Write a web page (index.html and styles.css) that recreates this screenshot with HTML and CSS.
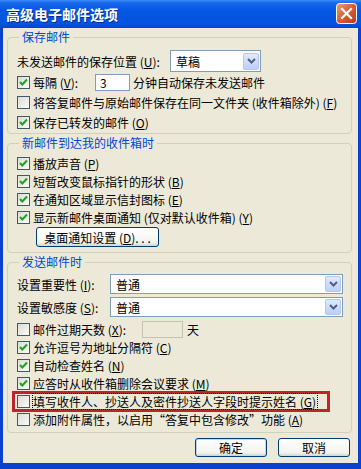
FILE: index.html
```html
<!DOCTYPE html>
<html lang="zh-CN">
<head>
  <meta charset="UTF-8">
  <title>高级电子邮件选项</title>
  <link rel="stylesheet" href="styles.css">
</head>
<body>

  <div class="window">
    <div class="titlebar">
      <span class="title">高级电子邮件选项</span>
      <span class="close">
        <svg width="21" height="21" viewBox="0 0 21 21">
          <defs>
            <linearGradient id="cg" x1="0" y1="0" x2="1" y2="1">
              <stop offset="0" stop-color="#F0A080"/>
              <stop offset="0.5" stop-color="#DC5A33"/>
              <stop offset="1" stop-color="#B9381A"/>
            </linearGradient>
          </defs>
          <rect x="0.5" y="0.5" width="20" height="20" rx="3" fill="url(#cg)" stroke="#fff"/>
          <path d="M6 6 L15 15 M15 6 L6 15" stroke="#fff" stroke-width="2.2" stroke-linecap="square"/>
        </svg>
      </span>
    </div>

    <div class="client">
      <fieldset class="group group-save">
        <legend>保存邮件</legend>
        <div class="row row-combo">
          <span class="label label-save">未发送邮件的保存位置 (<u>U</u>):</span>
          <span class="combo combo-draft">
            <span class="value">草稿</span>
            <span class="drop"><svg width="9" height="6" viewBox="0 0 9 6"><path d="M1 1 L4.5 4.5 L8 1" stroke="#4D6185" stroke-width="2" fill="none"/></svg></span>
          </span>
        </div>
        <div class="row">
          <span class="cb"><svg width="11" height="11" viewBox="0 0 11 11"><path d="M2 5 L4.3 7.5 L9 2.5" stroke="#21A121" stroke-width="2" fill="none"/></svg></span>
          <span class="label label-every">每隔 (<u>V</u>):</span>
          <span class="edit edit-minutes">3</span>
          <span>分钟自动保存未发送邮件</span>
        </div>
        <div class="row">
          <span class="cb"></span>
          <span>将答复邮件与原始邮件保存在同一文件夹 (收件箱除外) (<u>F</u>)</span>
        </div>
        <div class="row">
          <span class="cb"><svg width="11" height="11" viewBox="0 0 11 11"><path d="M2 5 L4.3 7.5 L9 2.5" stroke="#21A121" stroke-width="2" fill="none"/></svg></span>
          <span>保存已转发的邮件 (<u>O</u>)</span>
        </div>
      </fieldset>

      <fieldset class="group group-new">
        <legend>新邮件到达我的收件箱时</legend>
        <div class="row row-tight">
          <span class="cb"><svg width="11" height="11" viewBox="0 0 11 11"><path d="M2 5 L4.3 7.5 L9 2.5" stroke="#21A121" stroke-width="2" fill="none"/></svg></span>
          <span>播放声音 (<u>P</u>)</span>
        </div>
        <div class="row row-tight">
          <span class="cb"><svg width="11" height="11" viewBox="0 0 11 11"><path d="M2 5 L4.3 7.5 L9 2.5" stroke="#21A121" stroke-width="2" fill="none"/></svg></span>
          <span>短暂改变鼠标指针的形状 (<u>B</u>)</span>
        </div>
        <div class="row row-tight">
          <span class="cb"><svg width="11" height="11" viewBox="0 0 11 11"><path d="M2 5 L4.3 7.5 L9 2.5" stroke="#21A121" stroke-width="2" fill="none"/></svg></span>
          <span>在通知区域显示信封图标 (<u>E</u>)</span>
        </div>
        <div class="row row-tight">
          <span class="cb"><svg width="11" height="11" viewBox="0 0 11 11"><path d="M2 5 L4.3 7.5 L9 2.5" stroke="#21A121" stroke-width="2" fill="none"/></svg></span>
          <span>显示新邮件桌面通知 (仅对默认收件箱) (<u>Y</u>)</span>
        </div>
        <button class="btn btn-notify">桌面通知设置 (<u>D</u>). . .</button>
      </fieldset>

      <fieldset class="group group-send">
        <legend>发送邮件时</legend>
        <div class="row row-combo2">
          <span class="label label-send">设置重要性 (<u>I</u>):</span>
          <span class="combo combo-wide">
            <span class="value">普通</span>
            <span class="drop"><svg width="9" height="6" viewBox="0 0 9 6"><path d="M1 1 L4.5 4.5 L8 1" stroke="#4D6185" stroke-width="2" fill="none"/></svg></span>
          </span>
        </div>
        <div class="row row-combo2">
          <span class="label label-send">设置敏感度 (<u>S</u>):</span>
          <span class="combo combo-wide">
            <span class="value">普通</span>
            <span class="drop"><svg width="9" height="6" viewBox="0 0 9 6"><path d="M1 1 L4.5 4.5 L8 1" stroke="#4D6185" stroke-width="2" fill="none"/></svg></span>
          </span>
        </div>
        <div class="row row-tight row-expire">
          <span class="cb"></span>
          <span class="label label-expire">邮件过期天数 (<u>X</u>):</span>
          <span class="edit edit-days disabled"></span>
          <span class="unit">天</span>
        </div>
        <div class="row row-tight">
          <span class="cb"><svg width="11" height="11" viewBox="0 0 11 11"><path d="M2 5 L4.3 7.5 L9 2.5" stroke="#21A121" stroke-width="2" fill="none"/></svg></span>
          <span>允许逗号为地址分隔符 (<u>C</u>)</span>
        </div>
        <div class="row row-tight">
          <span class="cb"><svg width="11" height="11" viewBox="0 0 11 11"><path d="M2 5 L4.3 7.5 L9 2.5" stroke="#21A121" stroke-width="2" fill="none"/></svg></span>
          <span>自动检查姓名 (<u>N</u>)</span>
        </div>
        <div class="row row-tight">
          <span class="cb"><svg width="11" height="11" viewBox="0 0 11 11"><path d="M2 5 L4.3 7.5 L9 2.5" stroke="#21A121" stroke-width="2" fill="none"/></svg></span>
          <span>应答时从收件箱删除会议要求 (<u>M</u>)</span>
        </div>
        <div class="row row-tight row-marked">
          <span class="cb"></span>
          <span class="focus">填写收件人、抄送人及密件抄送人字段时提示姓名 (<u>G</u>)</span>
        </div>
        <div class="row row-tight">
          <span class="cb"></span>
          <span>添加附件属性，以启用“答复中包含修改”功能 (<u>A</u>)</span>
        </div>
      </fieldset>

      <div class="buttons">
        <button class="btn btn-default">确定</button>
        <button class="btn">取消</button>
      </div>
    </div>
  </div>

</body>
</html>
```

FILE: styles.css
```css
* {
  box-sizing: border-box;
}

body {
  margin: 0;
  font-family: "Noto Sans CJK SC", sans-serif;
  font-size: 12px;
  color: #000;
}

.window {
  width: 361px;
  height: 469px;
  background: #0B41CF;
  display: flex;
  flex-direction: column;
  overflow: hidden;
}

.titlebar {
  flex: none;
  height: 28px;
  display: flex;
  align-items: center;
  justify-content: space-between;
  padding: 0 4px 0 6px;
  background: linear-gradient(#3D8DF6 0, #1567EA 3px, #0556E2 40%, #0454DF 85%, #0346CC 100%);
}

.title {
  color: #fff;
  font-size: 14px;
  font-weight: bold;
  line-height: 28px;
  text-shadow: 1px 1px 0 #0A2A8A;
}

.close {
  display: flex;
  width: 21px;
  height: 21px;
  margin-top: -1px;
}

.client {
  flex: 1;
  margin: 0 3px 6px 3px;
  padding: 2px 6px 0 4px;
  background: #ECE9D8;
  display: flex;
  flex-direction: column;
}

/* group boxes */
.group {
  margin: 0;
  min-width: 0;
  border: 1px solid #D0D0BF;
  border-radius: 4px;
  padding: 6px 8px 1px 9px;
}

.group legend {
  color: #0046D5;
  line-height: 14px;
  padding: 0 3px;
  margin-left: 2px;
}

.group-new {
  margin-top: 2px;
  padding-top: 4px;
  padding-bottom: 5px;
}

.group-send {
  margin-top: 2px;
  padding-top: 5px;
  padding-bottom: 4px;
}

/* rows */
.row {
  display: flex;
  align-items: center;
  height: 20px;
  white-space: nowrap;
}

.row-combo {
  height: 22px;
}

.row-tight {
  height: 18px;
}

.row-combo2 {
  height: 20px;
  margin-bottom: 3px;
}

u {
  text-decoration: underline;
}

.label-save {
  width: 153px;
}

.label-every {
  width: 62px;
}

.label-send {
  width: 93px;
}

.label-expire {
  width: 109px;
}

/* checkbox */
.cb {
  flex: none;
  width: 13px;
  height: 13px;
  margin-right: 3px;
  border: 1px solid #42586C;
  background: linear-gradient(135deg, #DCDCD5, #FBFBF8);
  display: flex;
  align-items: center;
  justify-content: center;
}

/* combo box */
.combo {
  display: flex;
  align-items: center;
  border: 1px solid #7F9DB9;
  background: #fff;
  padding: 1px 1px 1px 5px;
  height: 100%;
}

.combo-draft {
  width: 91px;
}

.combo-wide {
  width: 233px;
}

.combo .value {
  flex: 1;
}

.drop {
  width: 16px;
  height: 100%;
  max-height: 17px;
  border: 1px solid #B4C6F2;
  border-radius: 2px;
  background: linear-gradient(#E0EAFE, #BDCFF9);
  display: flex;
  align-items: center;
  justify-content: center;
}

/* edit boxes */
.edit {
  height: 17px;
  border: 1px solid #7F9DB9;
  background: #fff;
  padding-left: 4px;
  line-height: 15px;
}

.edit-minutes {
  width: 35px;
  margin-right: 3px;
}

.edit-days {
  width: 41px;
  margin-right: 4px;
}

.edit.disabled {
  border-color: #C4C2B5;
  background: #ECE9D8;
}

/* highlighted option */
.row-marked {
  height: 21px;
  margin: -1px 0 -2px -5px;
  width: 318px;
  padding-left: 2px;
  border: 3px solid #BC262B;
}

.focus {
  outline: 1px dotted #000;
  outline-offset: 0;
  line-height: 15px;
  padding-right: 1px;
}

/* buttons */
.btn {
  font: inherit;
  color: #000;
  height: 19px;
  width: 72px;
  padding: 0;
  border: 1px solid #003C74;
  border-radius: 3px;
  background: linear-gradient(#FFFFFF, #F3F3EE 80%, #D8D3C6);
  line-height: 15px;
}

.btn-notify {
  width: 123px;
  height: 20px;
  margin: 1px 0 0 19px;
}

.btn-default {
  box-shadow: inset 0 0 0 1px #C2D6F8;
}

.buttons {
  display: flex;
  justify-content: flex-end;
  gap: 11px;
  margin-top: 5px;
  padding-right: 2px;
}
```
